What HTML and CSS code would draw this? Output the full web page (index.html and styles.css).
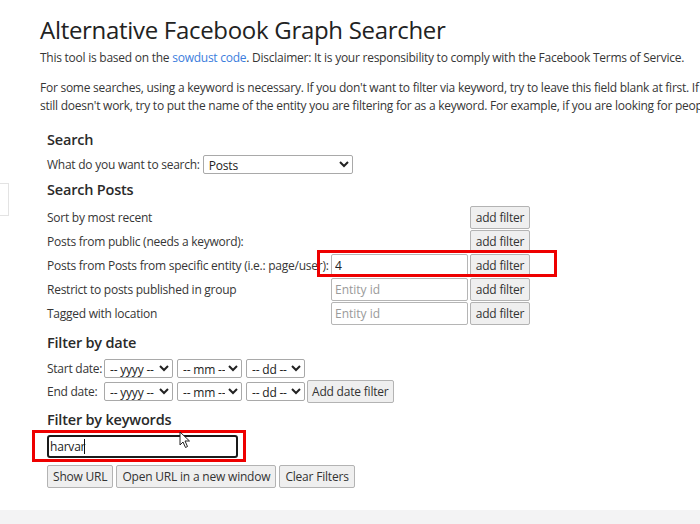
FILE: index.html
```html
<!DOCTYPE html>
<html>
<head>
<meta charset="utf-8">
<link rel="stylesheet" href="styles.css">
</head>
<body>
<div class="edge-box"></div>
<div class="page">
  <h1 class="title">Alternative Facebook Graph Searcher</h1>
  <p class="intro">This tool is based on the <a class="link" href="#">sowdust code</a>. Disclaimer: It is your responsibility to comply with the Facebook Terms of Service.</p>
  <p class="intro second">For some searches, using a keyword is necessary. If you don't want to filter via keyword, try to leave this field blank at first. If it<br>still doesn't work, try to put the name of the entity you are filtering for as a keyword. For example, if you are looking for people</p>

  <div class="form">
    <h2 class="heading h-search">Search</h2>
    <div class="what-row">
      <span>What do you want to search:</span>
      <select class="sel sel-type"><option>Posts</option></select>
    </div>

    <h2 class="heading h-posts">Search Posts</h2>
    <div class="filters">
      <span class="lbl">Sort by most recent</span><span></span><button class="btn">add filter</button>
      <span class="lbl">Posts from public (needs a keyword):</span><span></span><button class="btn">add filter</button>
      <span class="lbl">Posts from Posts from specific entity (i.e.: page/user):</span><input class="txt" value="4"><button class="btn">add filter</button>
      <span class="lbl">Restrict to posts published in group</span><input class="txt" placeholder="Entity id"><button class="btn">add filter</button>
      <span class="lbl">Tagged with location</span><input class="txt" placeholder="Entity id"><button class="btn">add filter</button>
    </div>

    <h2 class="heading h-date">Filter by date</h2>
    <div class="date-row date-first">
      <span class="date-lbl">Start date:</span>
      <select class="sel sel-y"><option>-- yyyy --</option></select>
      <select class="sel sel-m"><option>-- mm --</option></select>
      <select class="sel sel-d"><option>-- dd --</option></select>
    </div>
    <div class="date-row">
      <span class="date-lbl">End date:</span>
      <select class="sel sel-y"><option>-- yyyy --</option></select>
      <select class="sel sel-m"><option>-- mm --</option></select>
      <select class="sel sel-d"><option>-- dd --</option></select>
      <button class="btn btn-date">Add date filter</button>
    </div>

    <h2 class="heading h-kw">Filter by keywords</h2>
    <input class="kw" value="harvar">
    <div class="actions">
      <button class="btn btn-act">Show URL</button>
      <button class="btn btn-act">Open URL in a new window</button>
      <button class="btn btn-act">Clear Filters</button>
    </div>
  </div>
</div>
<div class="footer-band"></div>

<div class="mark mark-entity"></div>
<div class="mark mark-kw"></div>
<div class="caret"></div>
<svg class="cursor" width="12" height="18" viewBox="0 0 12 18"><path d="M1 1 L1 14 L4 11 L6.5 16.5 L8.5 15.5 L6 10 L10.5 10 Z" fill="#fff" stroke="#222" stroke-width="1" stroke-linejoin="round"/></svg>
</body>
</html>
```

FILE: styles.css
```css
html, body {
  margin: 0;
  padding: 0;
}
body {
  width: 700px;
  height: 524px;
  overflow: hidden;
  position: relative;
  background: #fff;
  font-family: "Open Sans", "Noto Sans", sans-serif;
  font-size: 12px;
  letter-spacing: -0.25px;
  color: #363636;
}
.page {
  width: 900px;
  padding: 12px 0 0 40px;
}
.title {
  margin: 0;
  font-size: 24px;
  line-height: 36px;
  font-weight: 500;
  letter-spacing: -0.3px;
  color: #222;
}
.intro {
  margin: 1px 0 0;
  line-height: 18px;
  white-space: nowrap;
}
.intro.second {
  margin-top: 12px;
}
.link {
  color: #3b7ddd;
  text-decoration: none;
}
.form {
  padding-left: 7px;
}
.heading {
  margin: 0;
  font-size: 14.5px;
  font-weight: 600;
  line-height: 20px;
  letter-spacing: -0.2px;
  color: #2a2a2a;
}
.h-search { margin-top: 15px; }
.h-posts { margin-top: 6px; }
.h-date { margin-top: 8px; }
.h-kw { margin-top: 7px; }

.what-row {
  margin-top: 4px;
  height: 20px;
  display: flex;
  align-items: center;
  gap: 3px;
}
.sel {
  height: 19px;
  font-family: inherit;
  font-size: 12px;
  letter-spacing: -0.2px;
  color: #222;
  border: 1px solid #a9a9a9;
  border-radius: 2px;
  background: #fff;
  padding: 0 0 0 1px;
}
.sel-type { width: 150px; }
.sel-y { width: 69px; }
.sel-m { width: 65px; }
.sel-d { width: 59px; }

.filters {
  margin-top: 5px;
  display: grid;
  grid-template-columns: 283px 138px 60px;
  grid-auto-rows: 24px;
  column-gap: 1px;
  align-items: center;
}
.lbl {
  white-space: nowrap;
}
.txt {
  box-sizing: border-box;
  height: 23px;
  width: 137px;
  border: 1px solid #b5b5b5;
  border-radius: 2px;
  padding: 0 3px;
  font-family: inherit;
  font-size: 12px;
  color: #222;
}
.txt::placeholder { color: #9a9a9a; }
.btn {
  box-sizing: border-box;
  height: 23px;
  padding: 0 5px;
  font-family: inherit;
  font-size: 12px;
  letter-spacing: -0.2px;
  color: #333;
  background: #efefef;
  border: 1px solid #b3b3b3;
  border-radius: 2px;
  white-space: nowrap;
}
.filters .btn { width: 60px; padding: 0; }

.date-row {
  height: 23px;
  display: flex;
  align-items: center;
  gap: 4px;
}
.date-first { margin-top: 4px; }
.date-lbl {
  flex: none;
  width: 53px;
  white-space: nowrap;
}
.btn-date { margin-left: -2px; padding: 0 4px; }

.kw {
  display: block;
  box-sizing: border-box;
  margin-top: 5px;
  width: 191px;
  height: 23px;
  border: 2px solid #1a1a1a;
  border-radius: 3px;
  padding: 0 1px;
  font-family: inherit;
  font-size: 12px;
  letter-spacing: -0.2px;
  color: #222;
  outline: none;
}
.actions {
  margin-top: 7px;
  display: flex;
  gap: 3px;
}
.btn-act { height: 23px; }

.footer-band {
  position: absolute;
  left: 0;
  right: 0;
  bottom: 0;
  height: 14px;
  background: #f3f3f4;
}
.edge-box {
  position: absolute;
  left: -4px;
  top: 183px;
  width: 11px;
  height: 31px;
  border: 1px solid #e3e3e3;
  background: #fff;
}
.mark {
  position: absolute;
  border: 3px solid #ee0000;
  box-sizing: border-box;
}
.mark-entity {
  left: 317px;
  top: 250px;
  width: 240px;
  height: 27px;
}
.mark-kw {
  left: 32px;
  top: 430px;
  width: 214px;
  height: 32px;
}
.caret {
  position: absolute;
  left: 84px;
  top: 439px;
  width: 1px;
  height: 15px;
  background: #111;
}
.cursor {
  position: absolute;
  left: 179px;
  top: 431px;
}
```
